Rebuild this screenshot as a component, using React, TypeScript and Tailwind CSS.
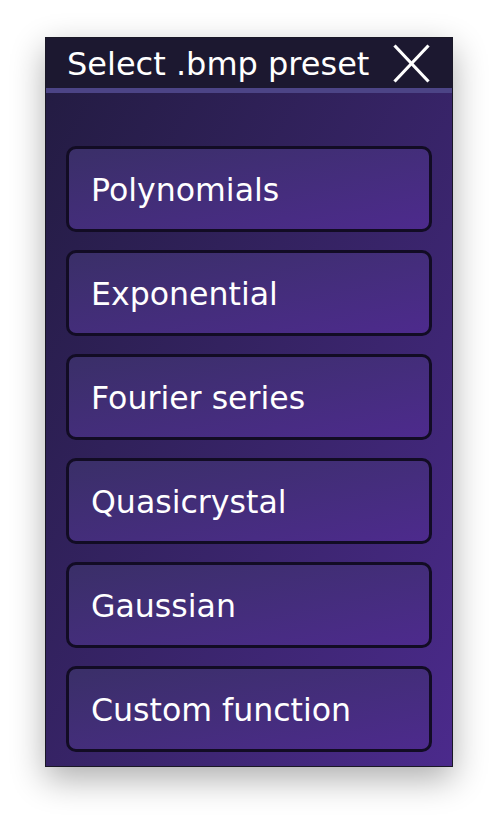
import React from "react";

const items = [
  "Polynomials",
  "Exponential",
  "Fourier series",
  "Quasicrystal",
  "Gaussian",
  "Custom function",
];

export default function App() {
  return (
    <div
      className="min-h-screen bg-white flex justify-center pt-[37px]"
      style={{ fontFamily: '"DejaVu Sans", Verdana, sans-serif' }}
    >
      <div className="w-[408px] h-[730px] border border-[#1a1826] bg-gradient-to-br from-[#221b40] to-[#4b2a8c] shadow-[0_12px_32px_rgba(0,0,0,0.32)] flex flex-col">
        <div className="h-[50px] bg-[#1c1830] flex items-center justify-between pl-[21px] pr-[22px]">
          <span className="text-white text-[32px] leading-none whitespace-nowrap pt-[2px]">
            Select .bmp preset
          </span>
          <svg width="37" height="39" viewBox="0 0 37 39" className="shrink-0">
            <line x1="1.5" y1="1.5" x2="35.5" y2="37.5" stroke="white" strokeWidth="3.2" />
            <line x1="35.5" y1="1.5" x2="1.5" y2="37.5" stroke="white" strokeWidth="3.2" />
          </svg>
        </div>
        <div className="h-[5px] bg-[#4c4486]" />
        <div className="flex flex-col gap-[18px] px-[20px] pt-[53px]">
          {items.map((t) => (
            <div
              key={t}
              className="h-[86px] rounded-[10px] border-[3px] border-[#120c24] bg-gradient-to-br from-[#3a2f68] to-[#4d2a8d] flex items-center pl-[22px] pt-[4px] text-white text-[31.6px] leading-none whitespace-nowrap"
            >
              {t}
            </div>
          ))}
        </div>
      </div>
    </div>
  );
}
